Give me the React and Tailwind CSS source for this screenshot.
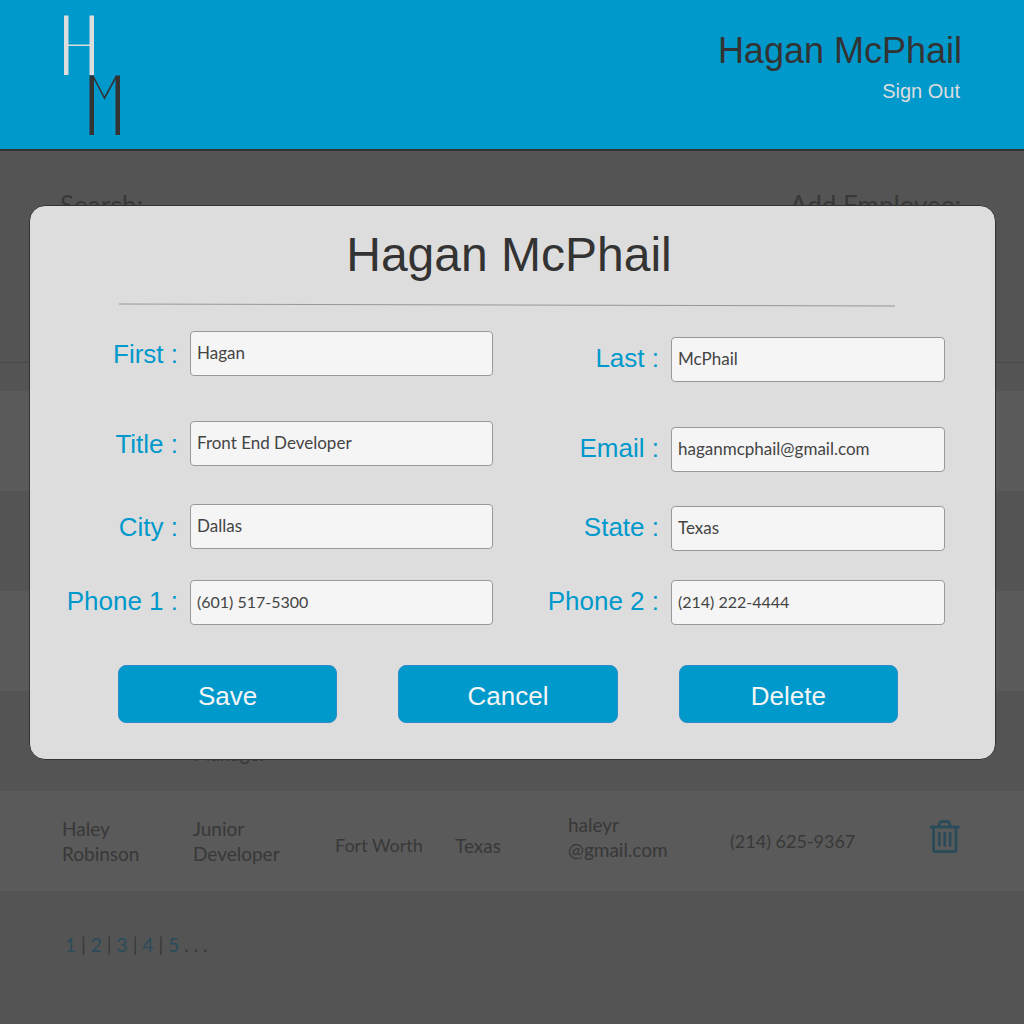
import React from "react";

const sans = "font-['Liberation_Sans',Arial,sans-serif]";
const body = "font-['Lato',sans-serif]";

function Logo() {
  return (
    <svg width="58" height="120" viewBox="0 0 58 120" role="img" aria-label="HM logo">
      <g fill="#dddddd">
        <rect x="1" y="0.5" width="4.5" height="59.5" />
        <rect x="26.5" y="0.5" width="4.5" height="59.5" />
        <rect x="5" y="29.5" width="22" height="1.5" />
      </g>
      <g fill="#333333">
        <rect x="26.5" y="60.5" width="4.5" height="59.5" />
        <rect x="52.5" y="60.5" width="4.5" height="59.5" />
      </g>
      <path d="M30 61 L41.5 83 L53.5 61" fill="none" stroke="#333333" strokeWidth="1.6" />
    </svg>
  );
}

function Trash() {
  return (
    <svg width="30" height="34" viewBox="0 0 30 34" fill="none" stroke="#294b5a" strokeWidth="2.8" aria-hidden="true">
      <path d="M0 7h29.6" />
      <path d="M8.8 6.5l1-3.3q.6-1.7 2-1.7h5.6q1.400 0 2 1.700l1 3.300" />
      <path d="M3.6 7v22.5q0 2.2 2.2 2.2h18q2.2 0 2.2-2.2V7" />
      <path d="M9.3 13.2v12.3M14.7 13.2v12.3M20.1 13.2v12.3" strokeLinecap="round" strokeWidth="2.7" />
    </svg>
  );
}

function Field({ id, label, value, type = "text", raised = false }) {
  return (
    <div className="flex items-center gap-3">
      <label
        htmlFor={id}
        className={`${sans} ${raised ? "pb-1" : ""} w-[114px] shrink-0 text-right text-[26px] leading-8 whitespace-nowrap text-[#0099cc]`}
      >
        {label} :
      </label>
      <input
        id={id}
        type={type}
        defaultValue={value}
        className={`${body} ${type === "tel" ? "text-[16px]" : "text-[17px]"} h-[45px] min-w-0 flex-1 rounded border border-[#999999] bg-[#f5f5f5] px-[6px] pb-[2px] text-[#444444] outline-none`}
      />
    </div>
  );
}

function Action({ children }) {
  return (
    <button type="button" className={`${sans} h-[58px] rounded-lg border border-[#2f8cc8] bg-[#0099cc] pt-1 text-[26px] leading-8 text-[#f5f5f5]`}>
      {children}
    </button>
  );
}

function EditDialog() {
  return (
    <form
      role="dialog"
      aria-labelledby="dialog-title"
      className="absolute top-[205px] right-[28px] left-[29px] rounded-2xl border border-[#333333] bg-[#dddddd] pt-[21px] pb-[36px]"
    >
      <h1 id="dialog-title" className={`${sans} pr-[7px] text-center text-[48px] leading-[56px] text-[#333333]`}>
        Hagan McPhail
      </h1>
      <div className="mt-[20px] pr-[100px] pl-[89px]">
        <svg className="block h-1 w-full" viewBox="0 0 776 4" preserveAspectRatio="none" aria-hidden="true">
          <line x1="0" y1="1" x2="776" y2="3" stroke="#979797" strokeWidth="1" />
        </svg>
      </div>
      <div className="mt-6 grid grid-cols-[429fr_400fr] gap-x-[52px] pr-[50px] pl-[34px]">
        <div>
          <Field id="first" label="First" value="Hagan" />
          <div className="mt-[45px]"><Field id="title" label="Title" value="Front End Developer" /></div>
          <div className="mt-[38px]"><Field id="city" label="City" value="Dallas" /></div>
          <div className="mt-[31px]"><Field id="phone1" label="Phone 1" value="(601) 517-5300" type="tel" raised /></div>
        </div>
        <div className="pt-[6px]">
          <Field id="last" label="Last" value="McPhail" raised />
          <div className="mt-[45px]"><Field id="email" label="Email" value="haganmcphail@gmail.com" type="email" raised /></div>
          <div className="mt-[34px]"><Field id="state" label="State" value="Texas" raised /></div>
          <div className="mt-[29px]"><Field id="phone2" label="Phone 2" value="(214) 222-4444" type="tel" raised /></div>
        </div>
      </div>
      <div className="mt-[40px] grid grid-cols-3 gap-[61px] pr-[97px] pl-[88px]">
        <Action>Save</Action>
        <Action>Cancel</Action>
        <Action>Delete</Action>
      </div>
    </form>
  );
}

export default function App() {
  return (
    <div className={`${body} relative min-h-screen bg-[#545454] text-[#383838]`}>
      <header className={`${sans} flex justify-between border-b-2 border-[#333333] bg-[#0099cc] pt-[15px] pr-[62px] pb-[14px] pl-[63px]`}>
        <Logo />
        <div className="pt-[14px] text-right text-[#333333]">
          <p className="text-[36px] leading-[44px]">Hagan McPhail</p>
          <a href="#sign-out" className="mt-1 block pr-[2px] text-[20px] leading-7 text-[#dddddd]">Sign Out</a>
        </div>
      </header>

      <main>
        <div className="flex h-[212px] justify-between border-b border-[#484848] pt-[38px] pr-[63px] pl-[60px] text-[26px] leading-8">
          <h2>Search:</h2>
          <h2>Add Employee:</h2>
        </div>
        <table className="mt-[28px] w-full table-fixed text-left text-[19px] leading-[25px]">
          <colgroup>
            <col className="w-[193px]" />
            <col className="w-[142px]" />
            <col className="w-[120px]" />
            <col className="w-[113px]" />
            <col className="w-[162px]" />
            <col className="w-[200px]" />
            <col />
          </colgroup>
          <tbody>
            <tr className="h-[100px] bg-[#5a5a5a]"><td colSpan={7} /></tr>
            <tr className="h-[100px]"><td colSpan={7} /></tr>
            <tr className="h-[100px] bg-[#5a5a5a]"><td colSpan={7} /></tr>
            <tr className="h-[100px]">
              <td />
              <td><br />Manager</td>
              <td colSpan={5} />
            </tr>
            <tr className="h-[100px] bg-[#5a5a5a]">
              <td className="pl-[62px]">Haley<br />Robinson</td>
              <td>Junior<br />Developer</td>
              <td className="pt-2 text-[18px]">Fort Worth</td>
              <td className="pt-2">Texas</td>
              <td className="pb-2">haleyr<br />@gmail.com</td>
              <td className="text-[18px]">(214) 625-9367</td>
              <td className="pb-2">
                <button type="button" aria-label="Delete Haley Robinson" className="block"><Trash /></button>
              </td>
            </tr>
          </tbody>
        </table>
        <nav aria-label="Pages" className="flex gap-[5px] px-[65px] py-10 text-[19px] leading-7">
          {[1, 2, 3, 4, 5].map((n) => (
            <React.Fragment key={n}>
              {n > 1 && <span>|</span>}
              <a href={`#page-${n}`} className="text-[#294b5a]">{n}</a>
            </React.Fragment>
          ))}
          <span>. . .</span>
        </nav>
      </main>

      <EditDialog />
    </div>
  );
}
